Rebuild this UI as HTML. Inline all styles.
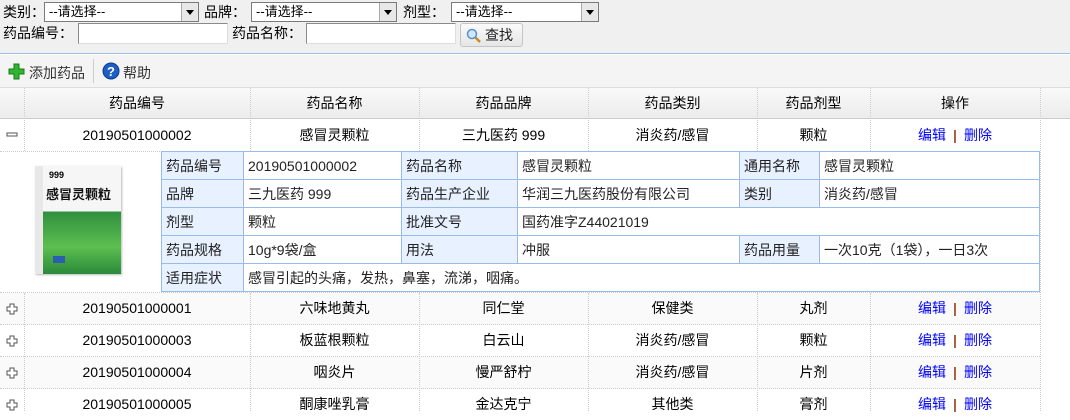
<!DOCTYPE html>
<html><head><meta charset="utf-8"><style>
*{margin:0;padding:0;box-sizing:border-box}
body{width:1070px;height:411px;overflow:hidden;background:#fff;font-family:"Liberation Sans","Noto Sans CJK SC",sans-serif;font-size:14px;color:#000;position:relative}
.a{position:absolute}
.top{left:0;top:0;width:1070px;height:54px;background:#f0f0f0;border-bottom:1px solid #9cc0e8}
.lbl{font-size:14px;line-height:20px;color:#000}
.sel{height:20px;border:1px solid #7a7a7a;background:#fff;font-size:13px;line-height:18px;padding-left:4px}
.sel i{position:absolute;right:0;top:0;width:17px;height:18px;background:#e8e8e8;border-left:1px solid #aaa}
.sel i:after{content:"";position:absolute;left:4px;top:7px;border:4px solid transparent;border-top:5px solid #000}
.inp{height:21px;border:1px solid #8a8a8a;border-bottom-color:#ddd;border-right-color:#ddd;background:#fff}
.btn{left:460px;top:23px;width:63px;height:24px;border:1px solid #c5c5c5;border-radius:3px;background:linear-gradient(#fafafa,#e6e6e6);font-size:14px;line-height:22px;padding-left:24px;color:#222}
.tb{left:0;top:55px;width:1070px;height:33px;background:#f4f4f4;border-bottom:1px solid #ddd}
.hd{top:88px;height:31px;background:linear-gradient(#f9f9f9,#ececec);border-bottom:1px solid #ccc;left:0;width:1070px}
.c{position:absolute;text-align:center;line-height:31px;white-space:nowrap}
.vl{position:absolute;width:0;border-left:1px dotted #ccc}
.hl{position:absolute;left:0;width:1040px;height:0;border-top:1px dotted #ccc}
a{color:#00f;text-decoration:none}
.sep{color:#a0522d;margin:0 7px;font-weight:bold}
table.d{position:absolute;left:161px;top:151px;border-collapse:collapse;border:1px solid #99bbe8}
table.d td{border:1px solid #99bbe8;height:28px;padding:0 4px;font-size:14px;white-space:nowrap;color:#222}
table.d td.k{background:#e8f1ff}
</style></head><body>
<div class="a top"></div>
<div class="a lbl" style="left:3px;top:2px">类别：</div>
<div class="a sel" style="left:44px;top:2px;width:155px">--请选择--<i></i></div>
<div class="a lbl" style="left:204px;top:2px">品牌：</div>
<div class="a sel" style="left:251px;top:2px;width:146px">--请选择--<i></i></div>
<div class="a lbl" style="left:403px;top:2px">剂型：</div>
<div class="a sel" style="left:451px;top:2px;width:148px">--请选择--<i></i></div>
<div class="a lbl" style="left:3px;top:23px">药品编号：</div>
<div class="a inp" style="left:78px;top:23px;width:150px"></div>
<div class="a lbl" style="left:232px;top:23px">药品名称：</div>
<div class="a inp" style="left:306px;top:23px;width:150px"></div>
<div class="a btn"><svg class="a" style="left:5px;top:4px" width="16" height="16"><circle cx="6" cy="6" r="4.5" fill="#cfe6ff" stroke="#5a8fc8" stroke-width="1.5"/><line x1="9.5" y1="9.5" x2="14" y2="14" stroke="#c58a2a" stroke-width="2.5"/></svg>查找</div>
<div class="a tb"></div>
<svg class="a" style="left:8px;top:63px" width="17" height="17"><path d="M6 1h5v5h5v5h-5v5H6v-5H1V6h5z" fill="#2fb52f" stroke="#1a7a1a"/></svg>
<div class="a" style="left:29px;top:63px;font-size:14px;color:#333">添加药品</div>
<div class="a" style="left:93px;top:59px;width:1px;height:24px;background:#ccc"></div>
<svg class="a" style="left:102px;top:62px" width="18" height="18"><circle cx="9" cy="9" r="8" fill="#1d5fc4" stroke="#0b3a8a"/><text x="9" y="14" font-size="13" font-weight="bold" fill="#fff" text-anchor="middle" font-family="Liberation Sans">?</text></svg>
<div class="a" style="left:123px;top:63px;font-size:14px;color:#333">帮助</div>
<div class="a hd"></div>
<div class="c" style="left:24px;width:226px;top:88px">药品编号</div>
<div class="c" style="left:250px;width:169px;top:88px">药品名称</div>
<div class="c" style="left:419px;width:169px;top:88px">药品品牌</div>
<div class="c" style="left:588px;width:169px;top:88px">药品类别</div>
<div class="c" style="left:757px;width:113px;top:88px">药品剂型</div>
<div class="c" style="left:870px;width:170px;top:88px">操作</div>
<div class="a" style="left:0;top:293px;width:1040px;height:32px;background:#fafafa"></div>
<div class="a" style="left:0;top:357px;width:1040px;height:32px;background:#fafafa"></div>
<div class="vl" style="left:24px;top:88px;height:63px"></div>
<div class="vl" style="left:250px;top:88px;height:63px"></div>
<div class="vl" style="left:419px;top:88px;height:63px"></div>
<div class="vl" style="left:588px;top:88px;height:63px"></div>
<div class="vl" style="left:757px;top:88px;height:63px"></div>
<div class="vl" style="left:870px;top:88px;height:63px"></div>
<div class="vl" style="left:1040px;top:88px;height:323px"></div>
<div class="vl" style="left:24px;top:293px;height:118px"></div>
<div class="vl" style="left:250px;top:293px;height:118px"></div>
<div class="vl" style="left:419px;top:293px;height:118px"></div>
<div class="vl" style="left:588px;top:293px;height:118px"></div>
<div class="vl" style="left:757px;top:293px;height:118px"></div>
<div class="vl" style="left:870px;top:293px;height:118px"></div>
<div class="hl" style="top:151px"></div>
<div class="hl" style="top:292px"></div>
<div class="hl" style="top:324px"></div>
<div class="hl" style="top:356px"></div>
<div class="hl" style="top:388px"></div>
<svg class="a" style="left:6px;top:130px" width="12" height="10"><rect x="1" y="3" width="10" height="3" fill="#fff" stroke="#555"/></svg>
<div class="c" style="left:24px;width:226px;top:120px">20190501000002</div>
<div class="c" style="left:250px;width:169px;top:120px">感冒灵颗粒</div>
<div class="c" style="left:419px;width:169px;top:120px">三九医药 999</div>
<div class="c" style="left:588px;width:169px;top:120px">消炎药/感冒</div>
<div class="c" style="left:757px;width:113px;top:120px">颗粒</div>
<div class="c" style="left:870px;width:170px;top:120px"><a>编辑</a><span class="sep">|</span><a>删除</a></div>
<div class="a" style="left:35px;top:166px;width:86px;height:108px;background:linear-gradient(#f6f6f6 0,#f6f6f6 42%,#2f8f3f 42%,#5cbf50 75%,#2a8a3a 100%);box-shadow:1px 1px 2px #bbb">
<div class="a" style="left:0;top:0;width:8px;height:108px;background:#e8e8e8"></div>
<div class="a" style="left:14px;top:4px;font-size:9px;font-weight:bold">999</div>
<div class="a" style="left:11px;top:18px;font-size:13px;font-weight:bold;white-space:nowrap;color:#111">感冒灵颗粒</div>
<div class="a" style="left:18px;top:90px;width:12px;height:7px;background:#2a5fb0"></div>
</div>
<table class="d">
<tr><td class="k" style="width:82px">药品编号</td><td style="width:158px">20190501000002</td><td class="k" style="width:116px">药品名称</td><td style="width:222px">感冒灵颗粒</td><td class="k" style="width:80px">通用名称</td><td style="width:220px">感冒灵颗粒</td></tr>
<tr><td class="k">品牌</td><td>三九医药 999</td><td class="k">药品生产企业</td><td>华润三九医药股份有限公司</td><td class="k">类别</td><td>消炎药/感冒</td></tr>
<tr><td class="k">剂型</td><td>颗粒</td><td class="k">批准文号</td><td colspan="3">国药准字Z44021019</td></tr>
<tr><td class="k">药品规格</td><td>10g*9袋/盒</td><td class="k">用法</td><td>冲服</td><td class="k">药品用量</td><td>一次10克（1袋），一日3次</td></tr>
<tr><td class="k">适用症状</td><td colspan="5">感冒引起的头痛，发热，鼻塞，流涕，咽痛。</td></tr>
</table>
<svg class="a" style="left:6px;top:303px" width="12" height="12"><path d="M4 1h4v3h3v4H8v3H4V8H1V4h3z" fill="#fff" stroke="#555"/></svg>
<div class="c" style="left:24px;width:226px;top:293px">20190501000001</div>
<div class="c" style="left:250px;width:169px;top:293px">六味地黄丸</div>
<div class="c" style="left:419px;width:169px;top:293px">同仁堂</div>
<div class="c" style="left:588px;width:169px;top:293px">保健类</div>
<div class="c" style="left:757px;width:113px;top:293px">丸剂</div>
<div class="c" style="left:870px;width:170px;top:293px"><a>编辑</a><span class="sep">|</span><a>删除</a></div>
<svg class="a" style="left:6px;top:335px" width="12" height="12"><path d="M4 1h4v3h3v4H8v3H4V8H1V4h3z" fill="#fff" stroke="#555"/></svg>
<div class="c" style="left:24px;width:226px;top:325px">20190501000003</div>
<div class="c" style="left:250px;width:169px;top:325px">板蓝根颗粒</div>
<div class="c" style="left:419px;width:169px;top:325px">白云山</div>
<div class="c" style="left:588px;width:169px;top:325px">消炎药/感冒</div>
<div class="c" style="left:757px;width:113px;top:325px">颗粒</div>
<div class="c" style="left:870px;width:170px;top:325px"><a>编辑</a><span class="sep">|</span><a>删除</a></div>
<svg class="a" style="left:6px;top:367px" width="12" height="12"><path d="M4 1h4v3h3v4H8v3H4V8H1V4h3z" fill="#fff" stroke="#555"/></svg>
<div class="c" style="left:24px;width:226px;top:357px">20190501000004</div>
<div class="c" style="left:250px;width:169px;top:357px">咽炎片</div>
<div class="c" style="left:419px;width:169px;top:357px">慢严舒柠</div>
<div class="c" style="left:588px;width:169px;top:357px">消炎药/感冒</div>
<div class="c" style="left:757px;width:113px;top:357px">片剂</div>
<div class="c" style="left:870px;width:170px;top:357px"><a>编辑</a><span class="sep">|</span><a>删除</a></div>
<svg class="a" style="left:6px;top:399px" width="12" height="12"><path d="M4 1h4v3h3v4H8v3H4V8H1V4h3z" fill="#fff" stroke="#555"/></svg>
<div class="c" style="left:24px;width:226px;top:389px">20190501000005</div>
<div class="c" style="left:250px;width:169px;top:389px">酮康唑乳膏</div>
<div class="c" style="left:419px;width:169px;top:389px">金达克宁</div>
<div class="c" style="left:588px;width:169px;top:389px">其他类</div>
<div class="c" style="left:757px;width:113px;top:389px">膏剂</div>
<div class="c" style="left:870px;width:170px;top:389px"><a>编辑</a><span class="sep">|</span><a>删除</a></div>
</body></html>
